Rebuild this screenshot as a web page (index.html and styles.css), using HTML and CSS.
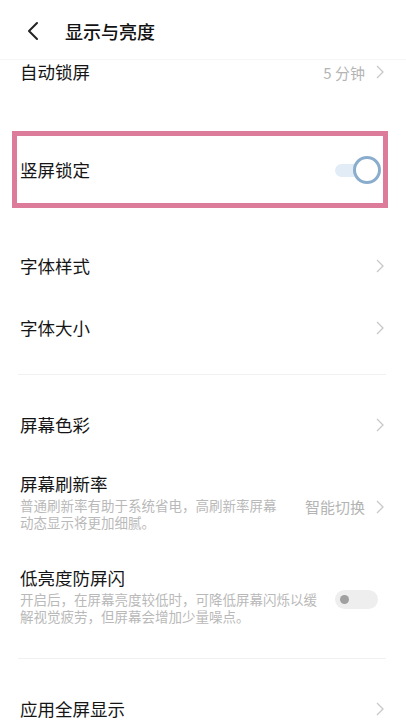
FILE: index.html
```html
<!DOCTYPE html>
<html lang="zh-CN">
<head>
<meta charset="utf-8">
<title>显示与亮度</title>
<link rel="stylesheet" href="styles.css">
</head>
<body>
<div class="page">
  <header class="topbar">
    <svg class="back" width="14" height="20" viewBox="0 0 14 20"><path d="M11 2 L3 10 L11 18" fill="none" stroke="#222" stroke-width="2" stroke-linecap="round" stroke-linejoin="round"/></svg>
    <h1 class="title">显示与亮度</h1>
  </header>

  <div class="row row-auto">
    <span class="label">自动锁屏</span>
    <span class="value">5 分钟<svg class="chev" width="8" height="14" viewBox="0 0 8 14"><path d="M1 1 L7 7 L1 13" fill="none" stroke="#c8c8c8" stroke-width="1.3"/></svg></span>
  </div>

  <div class="highlight">
    <span class="label">竖屏锁定</span>
    <span class="switch-on"><span class="knob-on"></span></span>
  </div>

  <div class="row row-font1">
    <span class="label">字体样式</span>
    <svg class="chev" width="8" height="14" viewBox="0 0 8 14"><path d="M1 1 L7 7 L1 13" fill="none" stroke="#c8c8c8" stroke-width="1.3"/></svg>
  </div>
  <div class="row row-font2">
    <span class="label">字体大小</span>
    <svg class="chev" width="8" height="14" viewBox="0 0 8 14"><path d="M1 1 L7 7 L1 13" fill="none" stroke="#c8c8c8" stroke-width="1.3"/></svg>
  </div>

  <div class="divider div1"></div>

  <div class="row row-color">
    <span class="label">屏幕色彩</span>
    <svg class="chev" width="8" height="14" viewBox="0 0 8 14"><path d="M1 1 L7 7 L1 13" fill="none" stroke="#c8c8c8" stroke-width="1.3"/></svg>
  </div>

  <div class="row-multi refresh">
    <div class="texts">
      <div class="label">屏幕刷新率</div>
      <div class="sub">普通刷新率有助于系统省电，高刷新率屏幕<br>动态显示将更加细腻。</div>
    </div>
    <span class="value">智能切换<svg class="chev" width="8" height="14" viewBox="0 0 8 14"><path d="M1 1 L7 7 L1 13" fill="none" stroke="#c8c8c8" stroke-width="1.3"/></svg></span>
  </div>

  <div class="row-multi lowflash">
    <div class="texts">
      <div class="label">低亮度防屏闪</div>
      <div class="sub">开启后，在屏幕亮度较低时，可降低屏幕闪烁以缓<br>解视觉疲劳，但屏幕会增加少量噪点。</div>
    </div>
    <span class="switch-off"><span class="knob-off"></span></span>
  </div>

  <div class="divider div2"></div>

  <div class="row row-full">
    <span class="label">应用全屏显示</span>
    <svg class="chev" width="8" height="14" viewBox="0 0 8 14"><path d="M1 1 L7 7 L1 13" fill="none" stroke="#c8c8c8" stroke-width="1.3"/></svg>
  </div>
</div>
</body>
</html>
```

FILE: styles.css
```css
* { box-sizing: border-box; }
html, body { margin: 0; padding: 0; background: #fff; }
body {
  font-family: "Noto Sans CJK SC", "Noto Sans", sans-serif;
  color: #151515;
  width: 406px;
  height: 725px;
  overflow: hidden;
}
.page { display: flex; flex-direction: column; }

.topbar {
  height: 60px;
  display: flex;
  align-items: center;
  padding-left: 26px;
  border-bottom: 1px solid #f5f5f5;
}
.back { display: block; margin-right: 25px; margin-top: 2px; }
.title {
  margin: 0;
  font-size: 18px;
  font-weight: 500;
  color: #111;
  line-height: 24px;
  margin-top: 3px;
}

.row {
  display: flex;
  align-items: center;
  justify-content: space-between;
  padding: 0 22px 0 20px;
}
.label {
  font-size: 17.5px;
  line-height: 24px;
  color: #151515;
}
.value {
  display: flex;
  align-items: center;
  gap: 11px;
  font-size: 15px;
  color: #b4b4b4;
}
.chev { display: block; }

.row-auto { height: 24px; }

.highlight {
  margin: 47px 18px 0 12px;
  height: 77px;
  border: 5px solid #dc7b9a;
  display: flex;
  align-items: center;
  justify-content: space-between;
  padding: 0 6px 0 3px;
}
.switch-on {
  position: relative;
  width: 34px;
  height: 13px;
  border-radius: 7px;
  background: #e2ecf6;
  margin-right: 8px;
  margin-top: 2px;
}
.knob-on {
  position: absolute;
  right: -12px;
  top: -8px;
  width: 28px;
  height: 28px;
  border-radius: 50%;
  background: #fff;
  border: 3px solid #8aadcd;
}

.row-font1 { height: 62px; margin-top: 27px; }
.row-font2 { height: 62px; }

.divider {
  height: 1px;
  background: #f1f1f1;
  margin: 0 20px 0 18px;
}
.div1 { margin-top: 15px; }

.row-color { height: 62px; margin-top: 19px; }

.row-multi {
  display: flex;
  align-items: center;
  justify-content: space-between;
  padding: 0 22px 0 20px;
}
.sub {
  font-size: 13.5px;
  line-height: 17px;
  color: #b9b9b9;
  margin-top: 1px;
}
.refresh { margin-top: 16px; }
.refresh .value { margin-top: 10px; }
.lowflash { margin-top: 35px; }

.switch-off {
  position: relative;
  width: 43px;
  height: 19px;
  border-radius: 10px;
  background: #eeeeee;
  margin-right: 6px;
  margin-top: 7px;
}
.knob-off {
  position: absolute;
  left: 5px;
  top: 5px;
  width: 9px;
  height: 9px;
  border-radius: 50%;
  background: #a0a0a0;
}

.div2 { margin-top: 33px; }
.row-full { height: 24px; margin-top: 38px; }
```
